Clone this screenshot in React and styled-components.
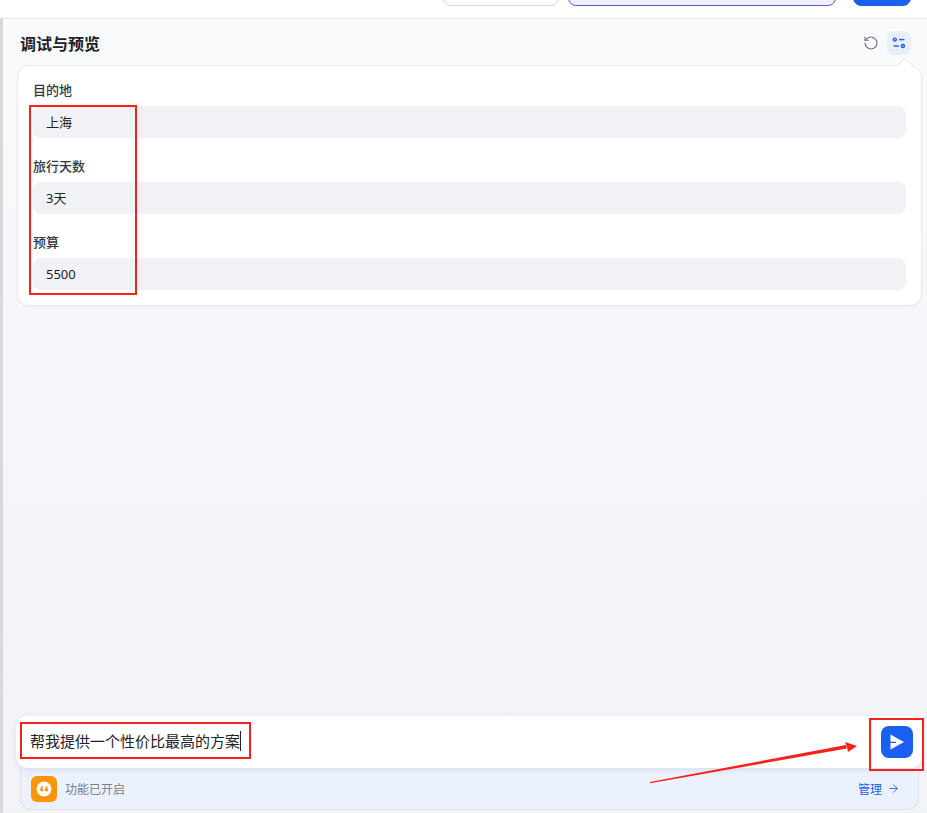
import React from "react";
import styled, { createGlobalStyle } from "styled-components";
import { ArrowRight, RotateCcw } from "lucide-react";

const GlobalStyle = createGlobalStyle`
  html, body {
    margin: 0;
    padding: 0;
    background: #fff;
  }
  body {
    font-family: "Noto Sans", "Noto Sans CJK SC", sans-serif;
    color: #1d2129;
  }
`;

const Page = styled.div`
  position: relative;
  width: 927px;
  height: 813px;
  overflow: hidden;
  display: flex;
  flex-direction: column;
  background: #fff;
`;

const TopBar = styled.div`
  flex: none;
  height: 19px;
  box-sizing: border-box;
  border-bottom: 1px solid #e3e5ea;
  display: flex;
  align-items: flex-end;
  gap: 9px;
  padding: 0 16px 12px 443px;
`;

const TopButton = styled.div`
  flex: none;
  box-sizing: border-box;
  height: 32px;
  width: ${(props) => props.width}px;
  margin-left: ${(props) => props.offset || 0}px;
  border-radius: 8px;
  border: 1px solid ${(props) => props.line};
  background: ${(props) => props.fill};
`;

const Body = styled.div`
  flex: 1;
  min-height: 0;
  display: flex;
  background: #fff;
`;

const Sliver = styled.div`
  flex: none;
  width: 3px;
  background: #d9d9dc;
`;

const Panel = styled.div`
  flex: 1;
  min-width: 0;
  display: flex;
  flex-direction: column;
  border-top-left-radius: 14px;
  background: linear-gradient(180deg, #f9fafc 0%, #f2f3f7 100%);
  padding: 0 5px 3px 14px;
`;

const Header = styled.div`
  flex: none;
  box-sizing: border-box;
  height: 46px;
  padding: 2px 11px 0 3px;
  display: flex;
  align-items: center;
  justify-content: space-between;
`;

const Title = styled.h2`
  margin: 1px 0 0;
  font-size: 16px;
  line-height: 24px;
  font-weight: 700;
  color: #1d2129;
`;

const Tools = styled.div`
  display: flex;
  align-items: center;
  gap: 4px;
`;

const ToolButton = styled.div`
  width: 24px;
  height: 24px;
  border-radius: 8px;
  display: flex;
  align-items: center;
  justify-content: center;
  background: ${(props) => (props.active ? "#e8eefc" : "transparent")};
  color: ${(props) => (props.active ? "#1a5ff0" : "#6b7078")};
`;

const Card = styled.div`
  position: relative;
  flex: none;
  box-sizing: border-box;
  height: 241px;
  padding: 14px 15px;
  background: #fff;
  border: 1px solid #e7e9ee;
  border-radius: 12px;
  box-shadow: 0 1px 2px rgba(30, 40, 70, 0.05);
  display: flex;
  flex-direction: column;
  gap: 18px;
`;

const Notch = styled.div`
  position: absolute;
  right: 10px;
  top: -6px;
  width: 11px;
  height: 11px;
  background: #fff;
  border-top: 1px solid #e7e9ee;
  border-left: 1px solid #e7e9ee;
  transform: rotate(45deg);
`;

const Field = styled.div`
  display: flex;
  flex-direction: column;
  gap: 6px;
`;

const Label = styled.div`
  height: 20px;
  line-height: 20px;
  font-size: 13px;
  font-weight: 500;
  color: #33373d;
`;

const Value = styled.div`
  height: 32px;
  line-height: 32px;
  padding-left: 13px;
  border-radius: 8px;
  background: #f1f2f6;
  font-size: 13px;
  color: #1d2129;
`;

const Spacer = styled.div`
  flex: 1;
`;

const Composer = styled.div`
  flex: none;
  position: relative;
  z-index: 1;
  box-sizing: border-box;
  height: 52px;
  margin-left: -1px;
  display: flex;
  align-items: center;
  justify-content: space-between;
  padding: 0 9px 0 14px;
  background: #fff;
  border-radius: 12px;
  box-shadow: 0 2px 6px rgba(40, 55, 90, 0.1);
`;

const Prompt = styled.div`
  display: flex;
  align-items: center;
  margin-top: -2px;
  font-size: 15px;
  line-height: 20px;
  color: #1d2129;
`;

const Caret = styled.span`
  display: inline-block;
  width: 1px;
  height: 20px;
  background: #1d2129;
`;

const SendButton = styled.div`
  width: 32px;
  height: 32px;
  border-radius: 8px;
  background: #1a5ff0;
  display: flex;
  align-items: center;
  justify-content: center;
`;

const Footer = styled.div`
  flex: none;
  box-sizing: border-box;
  height: 42px;
  margin: 0 3px 0 3px;
  padding: 0 18px 0 10px;
  display: flex;
  align-items: center;
  justify-content: space-between;
  background: #ebf1fd;
  border: 1px solid #dde2ee;
  border-top: none;
  border-radius: 0 0 12px 12px;
`;

const FooterLeft = styled.div`
  display: flex;
  align-items: center;
  gap: 8px;
  font-size: 12px;
  color: #7a808c;
`;

const Badge = styled.div`
  width: 26px;
  height: 26px;
  border-radius: 6px;
  background: #fb9508;
  display: flex;
  align-items: center;
  justify-content: center;
`;

const Manage = styled.div`
  display: flex;
  align-items: center;
  gap: 5px;
  font-size: 12px;
  color: #1a5ff0;
`;

const RedBox = styled.div`
  position: absolute;
  box-sizing: border-box;
  left: ${(props) => props.x}px;
  top: ${(props) => props.y}px;
  width: ${(props) => props.w}px;
  height: ${(props) => props.h}px;
  border: 2px solid #f5211c;
  pointer-events: none;
  z-index: 3;
`;

const ArrowMark = styled.svg`
  position: absolute;
  left: 640px;
  top: 730px;
  z-index: 3;
`;

const fields = [
  { label: "目的地", value: "上海" },
  { label: "旅行天数", value: "3天" },
  { label: "预算", value: "5500" },
];

const SlidersIcon = () => (
  <svg width="16" height="16" viewBox="0 0 16 16" fill="none" stroke="currentColor" strokeWidth="1.4">
    <circle cx="3.800" cy="4.600" r="1.500" />
    <path d="M8 4.600h5.400" />
    <path d="M2.400 11h5.400" />
    <circle cx="11.900" cy="11" r="1.500" />
  </svg>
);

const QuoteBadge = () => (
  <svg width="16" height="16" viewBox="0 0 16 16">
    <circle cx="8" cy="8" r="7.500" fill="#fff" />
    <path
      d="M6.600 4.900C5.200 5.500 4.300 6.500 4.300 8v2.300h3V7.600H6c0-.5.300-1 1-1.400zM11.300 4.900C9.900 5.500 9 6.500 9 8v2.300h3V7.600h-1.300c0-.5.300-1 1-1.400z"
      fill="#fb9508"
    />
  </svg>
);

const SendIcon = () => (
  <svg width="16" height="16" viewBox="0 0 16 16">
    <path d="M1.500 0.500 15 8 1.500 15.500V8.900H7V7.700H1.500z" fill="#fff" />
  </svg>
);

export default function App() {
  return (
    <Page>
      <GlobalStyle />
      <TopBar>
        <TopButton width={116} line="#d5d6da" fill="#fff" />
        <TopButton width={268} line="#4f5bd5" fill="#eef1fc" />
        <TopButton width={58} offset={8} line="#1a5ff0" fill="#1a5ff0" />
      </TopBar>
      <Body>
        <Sliver />
        <Panel>
          <Header>
            <Title>调试与预览</Title>
            <Tools>
              <ToolButton>
                <RotateCcw size={16} strokeWidth={1.6} />
              </ToolButton>
              <ToolButton active>
                <SlidersIcon />
              </ToolButton>
            </Tools>
          </Header>
          <Card>
            <Notch />
            {fields.map((field) => (
              <Field key={field.label}>
                <Label>{field.label}</Label>
                <Value>{field.value}</Value>
              </Field>
            ))}
          </Card>
          <Spacer />
          <Composer>
            <Prompt>
              帮我提供一个性价比最高的方案
              <Caret />
            </Prompt>
            <SendButton>
              <SendIcon />
            </SendButton>
          </Composer>
          <Footer>
            <FooterLeft>
              <Badge>
                <QuoteBadge />
              </Badge>
              功能已开启
            </FooterLeft>
            <Manage>
              管理
              <ArrowRight size={13} strokeWidth={1.6} />
            </Manage>
          </Footer>
        </Panel>
      </Body>
      <RedBox x={29} y={105} w={108} h={190} />
      <RedBox x={20} y={722} w={231} h={37} />
      <RedBox x={869} y={718} w={55} h={53} />
      <ArrowMark width="225" height="60" viewBox="0 0 225 60">
        <path d="M10 52 L206 15 L206.800 18.600 L10.200 53.200 Z" fill="#f5211c" />
        <path d="M217 16 L205 12 L207 17 L208 22 Z" fill="#f5211c" />
      </ArrowMark>
    </Page>
  );
}
